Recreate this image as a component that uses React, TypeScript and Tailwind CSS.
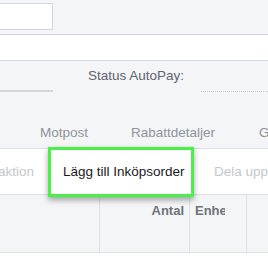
export default function App() {
  return (
    <div className="w-[268px] h-[266px] overflow-hidden bg-white font-['Liberation_Sans',Arial,sans-serif]">
      {/* top filter strip */}
      <div className="h-[34px] bg-[#f4f5f7] pt-[3px]">
        <div className="h-[27px] w-[54px] border border-[#d3d6db] bg-white -ml-px" />
      </div>
      <div className="h-[27px] border-y border-[#d3d6db] bg-white" />

      {/* status + tabs */}
      <div className="h-[88px] bg-[#f4f5f7] border-b border-[#dcdfe3]">
        <div className="h-[21px] flex items-end pl-[88px]">
          <span className="text-[13.5px] leading-none text-[#5f6570]">Status AutoPay:</span>
        </div>
        <div className="flex items-center mt-[8px]">
          <div className="w-[53px] h-[2px] bg-[#d3d6db]" />
          <div className="w-[148px]" />
          <div className="flex-1 border-t border-dotted border-[#c7cbd1]" />
        </div>
        <div className="flex mt-[34px] text-[13.5px] leading-none text-[#8e939b] whitespace-nowrap">
          <span className="ml-[40px]">Motpost</span>
          <span className="ml-[43px]">Rabattdetaljer</span>
          <span className="ml-[44px]">G</span>
        </div>
      </div>

      {/* toolbar */}
      <div className="h-[46px] bg-white border-b border-[#dcdfe3] flex items-center text-[13.5px] leading-none">
        <div className="w-[48px] pr-[14px] flex justify-end overflow-hidden">
          <span className="whitespace-nowrap text-[#c4c7cc]">aktion</span>
        </div>
        <div className="relative z-10 -my-[2px] h-[50px] w-[146px] border-[3px] border-[#48f048] bg-white shadow-[0_3px_6px_rgba(0,0,0,0.35)] flex items-center pl-[12px] text-[#1a1a1a] whitespace-nowrap">
          Lägg till Inköpsorder
        </div>
        <span className="ml-[20px] whitespace-nowrap text-[#c4c7cc]">Dela upp</span>
      </div>

      {/* table header */}
      <div className="h-[58px] bg-[#f4f5f7] border-b border-[#dcdfe3] flex">
        <div className="w-[100px] border-r border-[#dcdfe3]" />
        <div className="w-[90px] border-r border-[#dcdfe3] pt-[9px] pr-[5px] text-right text-[13px] font-bold leading-none text-[#6e737b]">
          Antal
        </div>
        <div className="w-[57px] border-r border-[#dcdfe3] pt-[9px] pl-[5px] text-[13px] font-bold leading-none text-[#6e737b]">
          <div className="w-[30px] overflow-hidden whitespace-nowrap">Enhet</div>
        </div>
        <div className="flex-1" />
      </div>
    </div>
  )
}
